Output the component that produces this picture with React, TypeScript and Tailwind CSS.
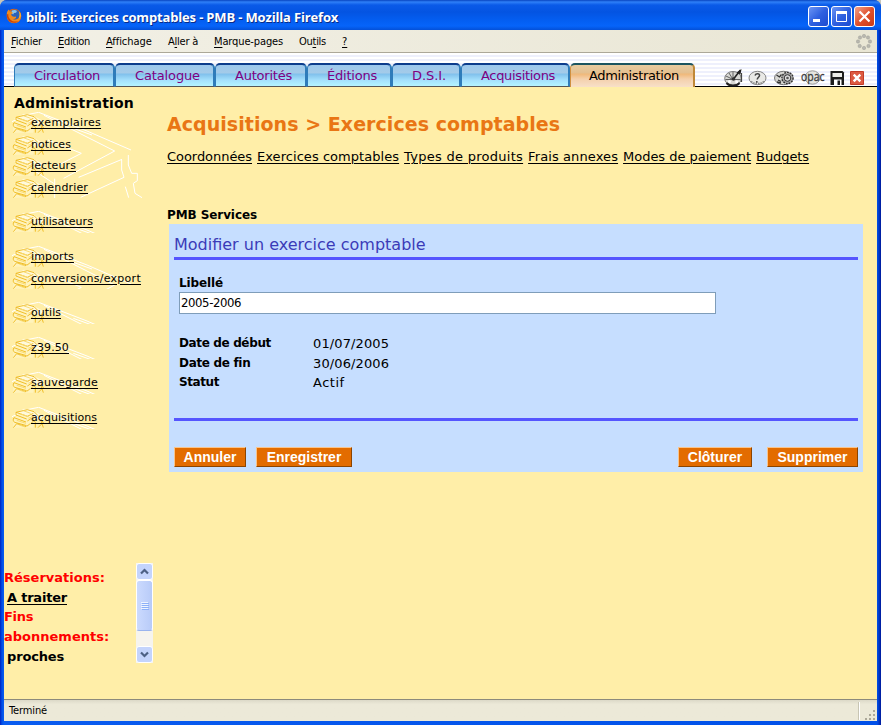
import React from "react";

const tabs: [string, string, string][] = [
  ["Circulation", "w-[101px]", "tracking-[-0.33px]"],
  ["Catalogue", "w-[100px]", "tracking-[-0.13px]"],
  ["Autorités", "w-[92px]", "tracking-[-0.22px]"],
  ["Éditions", "w-[85px]", "tracking-[-0.22px]"],
  ["D.S.I.", "w-[69px]", "tracking-[-0.08px]"],
  ["Acquisitions", "w-[109px]", "tracking-[-0.33px]"],
];

const menu: [string, string, string, string][] = [
  ["", "F", "ichier", "w-[47px] tracking-[-0.18px]"],
  ["", "E", "dition", "w-[48px] tracking-[-0.32px]"],
  ["", "A", "ffichage", "w-[62px] tracking-[-0.06px]"],
  ["A", "l", "ler à", "w-[46px] tracking-[-0.23px]"],
  ["", "M", "arque-pages", "w-[85px] tracking-[-0.13px]"],
  ["Ou", "t", "ils", "w-[43px] tracking-[-0.27px]"],
  ["", "?", "", "w-[6px]"],
];

const groups: { height: string; items: [string, string][] }[] = [
  {
    height: "h-[86px]",
    items: [
      ["exemplaires", "tracking-[0.29px]"],
      ["notices", "tracking-[0.05px]"],
      ["lecteurs", "tracking-[0.1px]"],
      ["calendrier", "tracking-[0.16px]"],
    ],
  },
  { height: "h-[22px]", items: [["utilisateurs", "tracking-[0.06px]"]] },
  {
    height: "h-[43px]",
    items: [
      ["imports", "tracking-[0.13px]"],
      ["conversions/export", "tracking-[0.27px]"],
    ],
  },
  { height: "h-[22px]", items: [["outils", "tracking-[0.02px]"]] },
  { height: "h-[22px]", items: [["z39.50", "tracking-[0.12px]"]] },
  { height: "h-[22px]", items: [["sauvegarde", "tracking-[0.25px]"]] },
  { height: "h-[22px]", items: [["acquisitions", "tracking-[0.06px]"]] },
];

const links: [string, string][] = [
  ["Coordonnées", "tracking-[-0.05px]"],
  ["Exercices comptables", "tracking-[0.05px]"],
  ["Types de produits", "tracking-[0.27px]"],
  ["Frais annexes", "tracking-[0.1px]"],
  ["Modes de paiement", "tracking-[-0.03px]"],
  ["Budgets", "tracking-[-0.08px]"],
];

const rows: [string, string, string, string][] = [
  ["Date de début", "tracking-[-0.36px]", "01/07/2005", "tracking-[0.11px]"],
  ["Date de fin", "tracking-[-0.32px]", "30/06/2006", "tracking-[0.11px]"],
  ["Statut", "tracking-[-0.42px]", "Actif", "tracking-[0.5px]"],
];

/* Firefox logo of the title bar */
const FirefoxIcon = () => (
  <svg width="16" height="16" viewBox="0 0 16 16">
    <circle cx="8" cy="8" r="7.3" fill="#e3640c" />
    <circle cx="8.6" cy="6.6" r="5.2" fill="#2c62b8" />
    <path d="M6 2.5c2-1 4-.6 5 .4l-1 1.8-2 .3-.8 1.4L5 5z" fill="#8fc6ea" />
    <path d="M.8 5.5C1 3.5 2 2.3 3 1.6l.3 1.6L5.5 3.5 6.8 5 5.2 6.3c0 2 2.200 3 4.600 2.200 1 1-.8 2.700-3 2.500 3 2 7.200-.5 7.200-4.500L13.200 3c2.600 3 2.600 7.500-.4 10.300C8.500 17 .5 14.500.8 5.500z" fill="#f08a1c" />
    <path d="M.8 6.500c-.3 3 1.200 5.500 3.200 7 3 2 6.500 1.500 8.500-.5-3.500 1.200-7 .4-8.700-2C2.600 9.400 2.200 8 2.300 6z" fill="#c8420a" />
    <path d="M13.300 3.500c1.700 2.500 1.600 5-.1 7.200.4-2 .6-4.200.1-7.200z" fill="#ffd84a" />
  </svg>
);

const caption = "w-[21px] h-[21px] rounded-[3px] border border-white flex items-center justify-center";

const WindowButtons = () => (
  <div className="flex gap-[2px] mt-[2px]">
    <div className={caption + " bg-linear-to-br from-[#6c94f4] via-[#2f60e0] to-[#1c4bd0]"}>
      <svg width="19" height="19"><path d="M4 13.500h7" stroke="#fff" strokeWidth="3" /></svg>
    </div>
    <div className={caption + " bg-linear-to-br from-[#6c94f4] via-[#2f60e0] to-[#1c4bd0]"}>
      <svg width="19" height="19">
        <path d="M4.500 5v9.500h10V5" fill="none" stroke="#fff" />
        <path d="M4 5.500h11" stroke="#fff" strokeWidth="3" />
      </svg>
    </div>
    <div className={caption + " bg-linear-to-br from-[#f0a088] via-[#e0502c] to-[#c83a14]"}>
      <svg width="19" height="19"><path d="M4.500 4.500l10 10M14.500 4.500l-10 10" stroke="#fff" strokeWidth="2.200" /></svg>
    </div>
  </div>
);

const dots: [number, number][] = [
  [8, 2], [12, 3.5], [14, 7.5], [12.5, 12], [8, 14], [3.7, 12], [2, 7.5], [4, 3.5],
];

const Throbber = () => (
  <svg width="16" height="16" className="mr-[5px] mt-px">
    {dots.map(([x, y]) => (
      <circle key={x + "-" + y} cx={x} cy={y} r="1.700" fill="#b8b7af" stroke="#a3a29a" strokeWidth="0.500" />
    ))}
  </svg>
);

const ToolIcons = () => (
  <svg width="142" height="20" viewBox="0 0 142 20" className="mr-[11px] -mb-px">
    {/* gauge */}
    <ellipse cx="9" cy="11.500" rx="8.300" ry="7" fill="#d8d8d4" stroke="#777" />
    <path d="M2.500 16c3 3.400 10 3.400 13 0" stroke="#222" strokeWidth="2" fill="none" />
    <path d="M9 12.500L2 9M9 12.500H1.500M9 12.500L5 6M9 12.500V5M9 12.500h7.500" stroke="#555" strokeWidth="0.900" />
    <path d="M9.500 12L16.500 3" stroke="#222" strokeWidth="1.600" />
    <path d="M12.500 5.500l5-3.500-1 5.500z" fill="#222" />
    <path d="M17.500 6v9" stroke="#444" strokeWidth="1.200" />
    <circle cx="9.500" cy="12" r="1.800" fill="#333" />
    <circle cx="5.500" cy="14.500" r="1.500" fill="#fff" />
    <circle cx="12.700" cy="14.700" r="1.500" fill="#fff" />
    {/* help */}
    <ellipse cx="33.500" cy="11" rx="8.500" ry="6.700" fill="#e9e9e6" stroke="#858585" />
    <path d="M27 14.500c4 3.200 10 3 13.500-.5" stroke="#8c8c8c" strokeWidth="2" strokeDasharray="1.500 1" fill="none" />
    <path d="M31 8.500c.8-2.500 5-2.500 4.500.2-.3 1.600-2 1.600-2.300 3.800M32.800 14v1.800" stroke="#444" strokeWidth="1.500" fill="none" />
    {/* gears */}
    <ellipse cx="59.500" cy="11" rx="9" ry="6.700" fill="#d8d8d4" stroke="#777" />
    <path d="M52.500 8l3 2 2-2.500M54 13l3 1.500M53 15l4 1" stroke="#333" strokeWidth="1.300" fill="none" />
    <circle cx="63.500" cy="11" r="5.600" fill="#aaa" stroke="#333" strokeWidth="1.400" strokeDasharray="1.800 1" />
    <circle cx="63.500" cy="11" r="3.300" fill="#ddd" stroke="#333" />
    <circle cx="63.500" cy="11" r="1.300" fill="#555" />
    {/* catalogue access */}
    <ellipse cx="88.500" cy="10.500" rx="7.500" ry="6.700" fill="#e4e4e0" stroke="#9a9a9a" />
    <text x="77" y="14" fontSize="13" textLength="23.500" lengthAdjust="spacingAndGlyphs" fill="#3a3a3a" stroke="#3a3a3a" strokeWidth="0.300" fontFamily="Open Sans, sans-serif">opac</text>
    {/* disk */}
    <path d="M106.500 4h12l1.500 1.500V18h-13.500z" fill="#1c1c1c" />
    <path d="M108.500 6h9.500v4h-9.500z" fill="#ecece8" />
    <path d="M110 12.500h7.500V18H110z" fill="#fff" />
    <path d="M113.500 13.500h2.500V18h-2.500z" fill="#1c1c1c" />
    {/* close */}
    <path d="M126.500 4.500h13v13h-13z" fill="#dc5a42" stroke="#c43c28" />
    <path d="M129.700 7.700l6.600 6.600M136.300 7.700l-6.600 6.600" stroke="#fff" strokeWidth="2.400" />
  </svg>
);

/* Large line drawing behind each block of links, clipped by the block */
const LineArt = () => (
  <svg width="130" height="86" viewBox="0 0 390 258" className="absolute left-0 top-0" fill="none" stroke="#ffffff" strokeWidth="3">
    <path d="M0 29L40 9 80 1 225 57 357 114M96 10L308 117 155 199M108 84L208 124 130 164M184 49L240 69M70 178L128 216M128 200v58M330 142L200 196M329 144v30l7 22-130 60M349 129v30l10 25h17v22l-12 8 5 30 21 13M340 224l10 33" />
  </svg>
);

/* Stack of books used as the bullet of every link */
const Books = () => (
  <svg width="34" height="22" viewBox="0 0 102 66" className="absolute left-0 top-0" fill="none">
    <path d="M6 20L36 5l30 8 28 14v14L66 34 30 24z" fill="#fff9dc" />
    <path d="M3 62h60l8-26-50-16-16 16z" fill="#fff3bd" />
    <path d="M12 16L46 8l20 6 12 12M12 16l34 12M12 16v8l32 12M6 32c-4 6-2 12 2 14l36 10M6 32l36 13M4 62l10-12 28 9M46 28l18-9M46 42l20-13M44 58l22-16M62 36l8 10v16M94 30l-8 10 8 6-16 16M88 44l6 18" stroke="#f0be28" strokeWidth="3" />
    <path d="M24 20l26 9M14 40l28 9M50 34l16-9M52 52l14-9M34 11l22 8M22 54l18 6" stroke="#f8da70" strokeWidth="3" />
  </svg>
);

const Sidebar = () => (
  <div className="w-[163px] h-full flex flex-col">
    <div className="h-[25px] pt-[6px] pl-[10px] text-[14px] leading-[20px] font-bold tracking-[0.18px] whitespace-pre">Administration</div>
    <div className="pl-[8px] flex flex-col gap-[13px]">
      {groups.map((g) => (
        <ul key={g.items[0][0]} className={"relative overflow-hidden w-[136px] " + g.height}>
          <LineArt />
          {g.items.map(([label, tracking]) => (
            <li key={label} className="relative h-[21.600px] overflow-hidden pl-[19px] text-[11px] leading-[21.600px]">
              <Books />
              <span className={"relative inline-block whitespace-pre underline underline-offset-[2px] decoration-1 " + tracking}>{label}</span>
            </li>
          ))}
        </ul>
      ))}
    </div>
    <div className="mt-auto mb-[36px] flex h-[100px]">
      <div className="w-[132px] pt-[5px] text-[13px] leading-[19.700px] font-bold whitespace-pre">
        <div className="text-[#ff0000]">Réservations:</div>
        <div className="pl-[3px] tracking-[-0.210px] underline underline-offset-[2px]">A traiter</div>
        <div className="text-[#ff0000] tracking-[-0.300px]">Fins</div>
        <div className="text-[#ff0000]">abonnements:</div>
        <div className="pl-[3px] tracking-[-0.150px]">proches</div>
      </div>
      <div className="w-[17px] h-[100px] bg-[#f6f4ee] flex flex-col">
        <div className="h-[17px] rounded-[3px] border border-white bg-[#c4d4fc] flex items-center justify-center">
          <svg width="9" height="7"><path d="M1 5.500L4.500 2 8 5.500" fill="none" stroke="#4d6185" strokeWidth="2.200" /></svg>
        </div>
        <div className="h-[51px] rounded-[3px] border border-white border-b-[#9ab4ee] bg-linear-to-r from-[#cbdafe] to-[#b8cbf8] flex items-center justify-center">
          <svg width="8" height="8"><path d="M0 .5h7M0 2.500h7M0 4.500h7M0 6.500h7" stroke="#eef4fe" /><path d="M1 1.500h7M1 3.500h7M1 5.500h7M1 7.500h7" stroke="#8cb0f8" /></svg>
        </div>
        <div className="mt-auto h-[17px] rounded-[3px] border border-white bg-[#c4d4fc] flex items-center justify-center">
          <svg width="9" height="7"><path d="M1 1.500L4.500 5 8 1.500" fill="none" stroke="#4d6185" strokeWidth="2.200" /></svg>
        </div>
      </div>
    </div>
  </div>
);

const Button = ({ label, width }: { label: string; width: string }) => (
  <button className={"h-[20px] bg-[#e36c00] border border-t-[#f8c48c] border-l-[#f8c48c] border-r-[#8c4400] border-b-[#8c4400] text-white font-bold text-[14px] leading-[18px] whitespace-pre font-['Liberation_Sans',sans-serif] " + width}>
    {label}
  </button>
);

export default function App() {
  return (
    <div className="w-[881px] h-[725px] bg-[#c9c6ba]">
      <div className="w-full h-full overflow-hidden rounded-t-[7px] bg-[#0a50e4] flex flex-col font-['DejaVu_Sans','Liberation_Sans',sans-serif] text-black">
        <div className="h-[30px] shrink-0 pl-[6px] pr-[6px] flex items-center justify-between bg-[linear-gradient(180deg,#0844c0_0px,#2f80f8_2px,#0a5ae8_5px,#0454e2_12px,#0460f4_22px,#0664fa_26px,#0450d8_30px)]">
          <div className="flex items-center gap-[4px] pt-[2px]">
            <FirefoxIcon />
            <span className="text-white font-bold text-[13px] leading-[18px] mt-[2px] tracking-[-0.160px] whitespace-pre font-['Open_Sans',sans-serif] [text-shadow:1px_1px_0_#0a2c88]">bibli: Exercices comptables - PMB - Mozilla Firefox</span>
          </div>
          <WindowButtons />
        </div>
        <div className="flex-1 min-h-0 flex flex-col px-[4px] pb-[4px] bg-[linear-gradient(90deg,#0020c0_0px,#0050e8_2px,#0a5cf0_4px,#0050e8_877px,#0038c8_879px,#001898_881px)]">
          <div className="flex-1 min-h-0 flex flex-col bg-[#ffeea8]">
            <div className="h-[23px] shrink-0 bg-linear-to-r from-[#f2f0e6] to-[#e9e6d4] border-b border-[#aca899] flex items-center justify-between pl-[7px] font-['DejaVu_Sans_Condensed','DejaVu_Sans',sans-serif] text-[11px]">
              <div className="flex leading-[18px] pt-[2px] whitespace-pre">
                {menu.map(([pre, key, post, cls]) => (
                  <span key={pre + key} className={cls}>
                    {pre}<span className="underline underline-offset-[2px]">{key}</span>{post}
                  </span>
                ))}
              </div>
              <Throbber />
            </div>
            <div className="h-[34px] shrink-0 border-b border-black pl-[10px] flex items-end justify-between bg-[repeating-linear-gradient(180deg,#ffffff_0px,#ffffff_2px,#eef0fc_2px,#eef0fc_4px)]">
              <div className="flex h-[24px] -mb-px text-[13px] leading-[22px] whitespace-pre">
                {tabs.map(([label, width, tracking]) => (
                  <div key={label} className={"h-[24px] rounded-t-[5px] border-t-2 border-t-[#0c3c8c] border-l border-l-[#2f7cba] border-r-2 border-r-[#2f7cba] border-b border-b-[#555] bg-[linear-gradient(180deg,#9cc8ec_0px,#a4cbe9_8px,#80c0ec_9px,#a4e0fc_15px,#b4f4ff_21px)] text-[#800080] pl-[19px] " + width + " " + tracking}>
                    {label}
                  </div>
                ))}
                <div className="h-[24px] w-[125px] rounded-t-[5px] border-t-2 border-t-[#1c5560] border-l border-l-[#d09040] border-r-2 border-r-[#c08838] bg-[linear-gradient(180deg,#e8cca0_0px,#e4c090_8px,#f0b878_9px,#f4d0ac_14px,#f8e0c8_22px)] pl-[18px] tracking-[-0.370px]">
                  Administration
                </div>
              </div>
              <ToolIcons />
            </div>
            <div className="flex-1 min-h-0 flex">
              <Sidebar />
              <div className="w-[696px] flex flex-col">
                <h1 className="mt-[24px] h-[26px] text-[19px] leading-[26px] font-bold text-[#e97614] tracking-[0.050px] whitespace-pre">{"Acquisitions > Exercices comptables"}</h1>
                <div className="mt-[10px] h-[20px] flex gap-[5px] text-[13px] leading-[20px] whitespace-pre">
                  {links.map(([label, tracking]) => (
                    <span key={label} className={"underline underline-offset-[2px] decoration-1 " + tracking}>{label}</span>
                  ))}
                </div>
                <div className="mt-[39px] h-[18px] text-[12px] leading-[18px] font-bold tracking-[-0.090px] whitespace-pre">PMB Services</div>
                <div className="ml-[2px] w-[694px] h-[248px] bg-[#c6deff] px-[5px] flex flex-col">
                  <div className="h-[36px] pt-[10px] border-b-[3px] border-[#5555ff] text-[16px] leading-[22px] text-[#3b3bb8] whitespace-pre">Modifier un exercice comptable</div>
                  <div className="pl-[5px] mt-[13px] h-[19px] text-[12px] leading-[20px] font-bold tracking-[-0.120px]">Libellé</div>
                  <div className="ml-[5px] w-[537px] h-[22px] bg-white border border-[#7f9db9] pl-[1px] text-[13px] leading-[19px] tracking-[-0.400px] font-['DejaVu_Sans_Condensed','DejaVu_Sans',sans-serif]">2005-2006</div>
                  <div className="pl-[5px] mt-[20px] h-[84px] text-[13px] leading-[19.600px] whitespace-pre">
                    {rows.map(([label, lt, value, vt]) => (
                      <div key={label} className="flex">
                        <span className={"w-[134px] text-[12px] font-bold " + lt}>{label}</span>
                        <span className={vt}>{value}</span>
                      </div>
                    ))}
                  </div>
                  <div className="h-[3px] bg-[#5555ff]" />
                  <div className="mt-[26px] flex">
                    <Button label="Annuler" width="w-[72px]" />
                    <Button label="Enregistrer" width="w-[96px] ml-[10px]" />
                    <Button label="Clôturer" width="w-[74px] ml-auto" />
                    <Button label="Supprimer" width="w-[91px] ml-[15px]" />
                  </div>
                </div>
              </div>
            </div>
            <div className="h-[22px] shrink-0 border-t border-[#8c8a7c] bg-linear-to-b from-[#dcd9c8] via-[#ece9d8] via-20% to-[#ece9d8] flex items-stretch justify-between pl-[5px] text-[11px] font-['DejaVu_Sans_Condensed','DejaVu_Sans',sans-serif]">
              <span className="leading-[22px] tracking-[-0.130px]">Terminé</span>
              <div className="flex items-end">
                <div className="w-[2px] h-[18px] mb-[1px] mr-[4px] bg-white border-l border-[#c8c5b4]" />
                <svg width="13" height="13">
                  <path d="M9 2h2v2h-2zM5 6h2v2H5zM9 6h2v2H9zM1 10h2v2H1zM5 10h2v2H5zM9 10h2v2H9z" fill="#aca899" />
                </svg>
              </div>
            </div>
          </div>
        </div>
      </div>
    </div>
  );
}
